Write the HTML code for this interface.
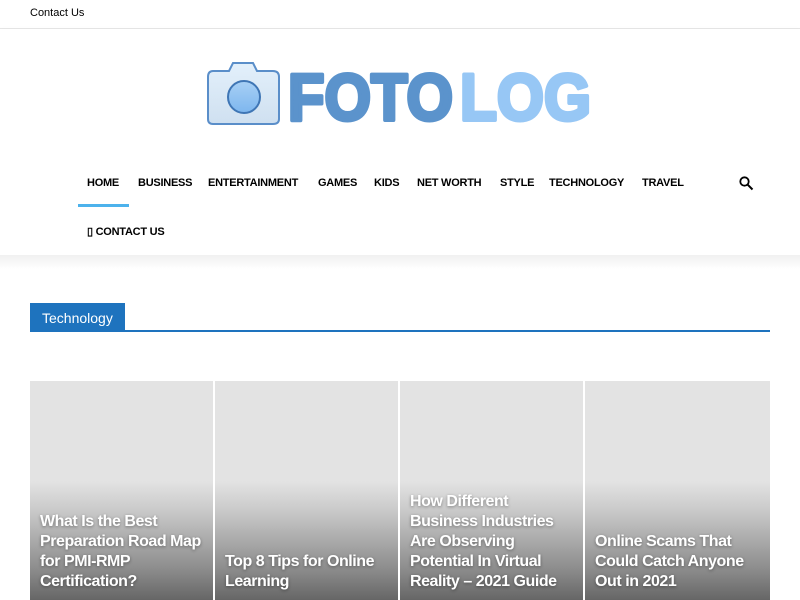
<!DOCTYPE html>
<html><head><meta charset="utf-8"><style>
*{margin:0;padding:0;box-sizing:border-box}
body{width:800px;height:600px;overflow:hidden;background:#fff;font-family:"Liberation Sans",sans-serif;position:relative}
.top{height:29px;border-bottom:1px solid #e6e6e6;font-size:11px;color:#000;padding:7px 30px}
.header{position:absolute;top:29px;left:0;width:800px;height:226px;background:#fff;box-shadow:0 4px 8px rgba(0,0,0,.08)}
.shade{position:absolute;top:255px;left:0;width:800px;height:14px;background:linear-gradient(#f0f0f0,#fff)}
.nav a{position:absolute;font-size:11px;font-weight:bold;color:#000;letter-spacing:-0.25px}
.bar{position:absolute;left:78px;top:204px;width:51px;height:3px;background:#4db2ec}
.logo{position:absolute;left:207px;top:61px}
.tag{position:absolute;left:30px;top:303px;width:95px;height:28px;background:#1e73be;color:#fff;font-size:14px;padding:7px 12px}
.line{position:absolute;left:30px;top:330px;width:740px;height:2px;background:#1e73be}
.card{position:absolute;top:381px;height:219px;background:linear-gradient(#e3e3e3 0,#e3e3e3 100px,#c9c9c9 130px,#8a8a8a 190px,#666 219px)}
.card h3{position:absolute;left:10px;bottom:8px;right:8px;color:#fff;font-size:16px;line-height:20px;font-weight:bold;letter-spacing:-0.45px;text-shadow:0 1px 3px rgba(0,0,0,.4)}
</style></head><body>
<div class="top">Contact Us</div>
<div class="header"></div>
<div class="shade"></div>
<svg class="logo" width="390" height="66" viewBox="0 0 390 66">
<defs><linearGradient id="g" x1="0" y1="0" x2="0" y2="1"><stop offset="0" stop-color="#e3f0fb"/><stop offset="1" stop-color="#cfe0f0"/></linearGradient>
<linearGradient id="c" x1="0" y1="0" x2="0" y2="1"><stop offset="0" stop-color="#a8d0f5"/><stop offset="1" stop-color="#7db6ee"/></linearGradient></defs>
<path d="M6 10 H22 L26 2 H46 L50 10 H66 Q72 10 72 16 V58 Q72 63 66 63 H6 Q1 63 1 58 V16 Q1 10 6 10Z" fill="url(#g)" stroke="#5a8ec9" stroke-width="2"/>
<circle cx="37" cy="36" r="16" fill="url(#c)" stroke="#3f76b5" stroke-width="2"/>
<text x="81" y="59" font-family="Liberation Sans" font-weight="bold" font-size="66" fill="#5b93cc" stroke="#5b93cc" stroke-width="4" stroke-linejoin="round" textLength="165" lengthAdjust="spacingAndGlyphs">FOTO</text>
<text x="253" y="59" font-family="Liberation Sans" font-weight="bold" font-size="66" fill="#97c7f5" stroke="#97c7f5" stroke-width="4" stroke-linejoin="round" textLength="131" lengthAdjust="spacingAndGlyphs">LOG</text>
</svg>
<div class="nav">
<a style="left:87px;top:177px">HOME</a>
<a style="left:138px;top:177px">BUSINESS</a>
<a style="left:208px;top:177px">ENTERTAINMENT</a>
<a style="left:318px;top:177px">GAMES</a>
<a style="left:374px;top:177px">KIDS</a>
<a style="left:417px;top:177px">NET WORTH</a>
<a style="left:500px;top:177px">STYLE</a>
<a style="left:549px;top:177px">TECHNOLOGY</a>
<a style="left:642px;top:177px">TRAVEL</a>
<a style="left:87px;top:225px">▯ CONTACT US</a>
</div>
<div class="bar"></div>
<svg style="position:absolute;left:739px;top:176px" width="15" height="15" viewBox="0 0 15 15"><circle cx="5.5" cy="5.5" r="4.2" fill="none" stroke="#000" stroke-width="1.8"/><path d="M8.7 8.7 L13.5 13.5" stroke="#000" stroke-width="2"/></svg>
<div class="tag">Technology</div>
<div class="line"></div>
<div class="card" style="left:30px;width:183px"><h3>What Is the Best Preparation Road Map for PMI-RMP Certification?</h3></div>
<div class="card" style="left:215px;width:183px"><h3>Top 8 Tips for Online Learning</h3></div>
<div class="card" style="left:400px;width:183px"><h3>How Different Business Industries Are Observing Potential In Virtual Reality – 2021 Guide</h3></div>
<div class="card" style="left:585px;width:185px"><h3>Online Scams That Could Catch Anyone Out in 2021</h3></div>
</body></html>
